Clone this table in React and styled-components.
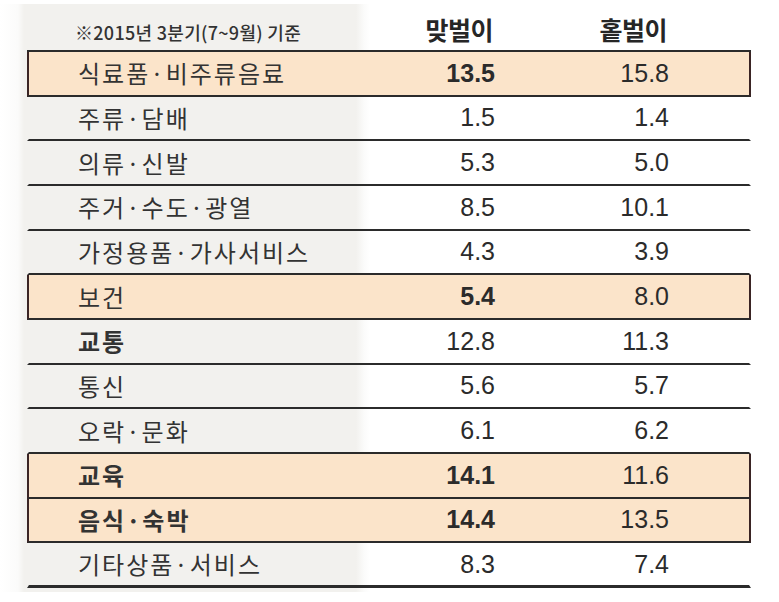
import React from 'react';
import styled, { createGlobalStyle } from 'styled-components';

const GlobalStyle = createGlobalStyle`
  html, body {
    margin: 0;
    padding: 0;
    background: #fff;
  }
  body {
    font-family: "Noto Sans CJK KR", "Noto Sans", sans-serif;
    color: #2b2b2b;
  }
`;

const rows = [
  { label: '식료품·비주류음료', a: '13.5', b: '15.8', hl: true, boldA: true },
  { label: '주류·담배', a: '1.5', b: '1.4' },
  { label: '의류·신발', a: '5.3', b: '5.0' },
  { label: '주거·수도·광열', a: '8.5', b: '10.1' },
  { label: '가정용품·가사서비스', a: '4.3', b: '3.9' },
  { label: '보건', a: '5.4', b: '8.0', hl: true, boldA: true },
  { label: '교통', a: '12.8', b: '11.3', boldLabel: true },
  { label: '통신', a: '5.6', b: '5.7' },
  { label: '오락·문화', a: '6.1', b: '6.2' },
  { label: '교육', a: '14.1', b: '11.6', hl: true, boldLabel: true, boldA: true },
  { label: '음식·숙박', a: '14.4', b: '13.5', hl: true, boldLabel: true, boldA: true },
  { label: '기타상품·서비스', a: '8.3', b: '7.4' },
];

function App() {
  return (
    <Page>
      <GlobalStyle />
      <Board>
        <Header>
          <Note>※2015년 3분기(7~9월) 기준</Note>
          <HeadCell>맞벌이</HeadCell>
          <HeadCell>홑벌이</HeadCell>
        </Header>
        <Table>
          {rows.map((r) => (
            <Row key={r.label} $hl={r.hl}>
              <Label $bold={r.boldLabel}>{r.label}</Label>
              <Num $bold={r.boldA}>{r.a}</Num>
              <Num>{r.b}</Num>
            </Row>
          ))}
        </Table>
      </Board>
    </Page>
  );
}

const Page = styled.div`
  width: 779px;
  height: 602px;
  overflow: hidden;
  background-color: #fff;
  background-image: linear-gradient(
    to right,
    #fff 0,
    #fbfbfa 18px,
    #f2f1ee 24px,
    #f2f1ee 356px,
    #fbfbfa 364px,
    #fff 370px
  );
  background-repeat: no-repeat;
  background-size: 100% 588px;
  background-position: 0 4px;
`;

const Board = styled.div`
  width: 724px;
  margin-left: 27px;
  display: flex;
  flex-direction: column;
`;

const columns = `
  display: grid;
  grid-template-columns: 336px 130px 174px 84px;
  align-items: center;
`;

const Header = styled.div`
  ${columns};
  height: 50px;
  align-items: end;
  padding-bottom: 8px;
  box-sizing: border-box;
`;

const Note = styled.div`
  padding-left: 48px;
  font-size: 18px;
  font-weight: 500;
  letter-spacing: 0.3px;
  color: #333;
  line-height: 1;
  padding-bottom: 1px;
  white-space: nowrap;
`;

const HeadCell = styled.div`
  text-align: right;
  font-size: 25px;
  font-weight: 700;
  line-height: 1;
  letter-spacing: -0.5px;
  color: #262626;
`;

const Table = styled.div`
  display: flex;
  flex-direction: column;
  border-top: 2px solid #2b2b2b;
`;

const Row = styled.div`
  ${columns};
  height: 44.67px;
  box-sizing: border-box;
  border-bottom: 2px solid #2b2b2b;
  border-left: 2px solid ${(p) => (p.$hl ? '#3a2424' : 'transparent')};
  border-right: 2px solid ${(p) => (p.$hl ? '#3a2424' : 'transparent')};
  background: ${(p) => (p.$hl ? '#fbe4ca' : 'transparent')};
  &:last-child {
    border-bottom-width: 3px;
  }
`;

const Label = styled.div`
  padding-left: 49px;
  font-size: 24px;
  font-weight: ${(p) => (p.$bold ? 700 : 400)};
  letter-spacing: 2px;
  line-height: 1;
  color: #333;
  white-space: nowrap;
`;

const Num = styled.div`
  text-align: right;
  font-family: "Liberation Sans", Arial, sans-serif;
  font-size: 25px;
  font-weight: ${(p) => (p.$bold ? 700 : 400)};
  line-height: 1;
  color: #2b2b2b;
`;

export default App;
